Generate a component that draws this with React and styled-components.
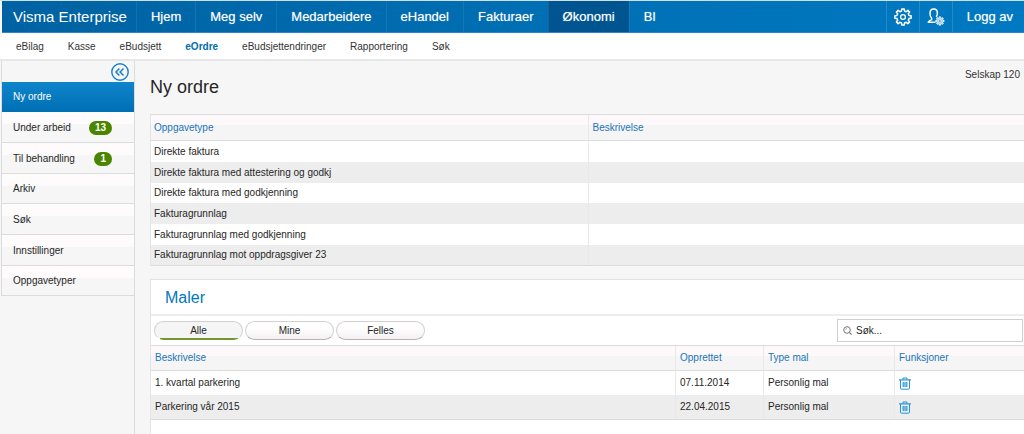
import React, { useState } from "react";
import styled, { createGlobalStyle } from "styled-components";

const colors = {
  text: "#262626",
  link: "#1a75b8",
  blue: "#0077c0",
  line: "#dcdcdc",
  page: "#f6f6f6",
  stripe: "#ededed",
  green: "#4a8500",
};

const GlobalStyle = createGlobalStyle`
  * {
    box-sizing: border-box;
  }

  body {
    margin: 0;
    background: ${colors.page};
    color: ${colors.text};
    font-family: "Liberation Sans", Arial, sans-serif;
    font-size: 10px;
    line-height: 14px;
  }

  a {
    color: inherit;
    text-decoration: none;
  }

  button,
  input {
    font: inherit;
    color: inherit;
  }
`;

const Page = styled.div`
  min-height: 100vh;
  display: flex;
  flex-direction: column;
  border-top: 1px solid #cfe0e4;
`;

const TopBar = styled.header`
  display: flex;
  height: 32px;
  margin-left: 2px;
  background: linear-gradient(90deg, #0062a2 0%, #0072b8 65%, #0079c2 100%);
  border-bottom: 1px solid #2f88c0;
  color: #fff;
  font-size: 13px;
  text-shadow: 0 0 1px rgba(255, 255, 255, 0.5);
`;

const Brand = styled.a`
  display: flex;
  align-items: center;
  padding: 0 9px 0 11px;
  font-size: 15px;
  text-shadow: none;
`;

const MainNav = styled.nav`
  display: flex;
  flex: 1;
`;

const MainLink = styled.a`
  display: flex;
  align-items: center;
  padding: 0 14px;
  border-left: 1px solid rgba(255, 255, 255, 0.08);
  background: ${(props) => (props.$active ? "#005590" : "transparent")};
  white-space: nowrap;
`;

const TopTool = styled.button`
  display: flex;
  align-items: center;
  justify-content: center;
  width: 33px;
  padding: 0;
  border: 0;
  border-left: 1px solid rgba(255, 255, 255, 0.14);
  background: transparent;
  color: #fff;
  cursor: pointer;
`;

const LogOut = styled(MainLink)`
  padding: 0 11px 0 14px;
  border-left-color: rgba(255, 255, 255, 0.14);
`;

const SubNav = styled.nav`
  display: flex;
  align-items: center;
  gap: 24px;
  height: 28px;
  padding: 1px 0 0 16px;
  background: #fff;
  border-bottom: 2px solid #e6e6e6;
`;

const SubLink = styled.a`
  color: ${(props) => (props.$active ? "#006cb0" : "#333")};
  font-weight: ${(props) => (props.$active ? 700 : 400)};
`;

const Body = styled.div`
  display: flex;
  flex: 1;
`;

const Sidebar = styled.aside`
  flex: 0 0 134px;
  margin-left: 1px;
  border-right: 1px solid ${colors.line};
`;

const CollapseRow = styled.div`
  display: flex;
  justify-content: flex-end;
  align-items: center;
  height: 21px;
  padding-right: 5px;
  border-left: 1px solid ${colors.line};
`;

const CollapseButton = styled.button`
  display: flex;
  padding: 0;
  border: 0;
  background: transparent;
  color: #1480cb;
  cursor: pointer;
`;

const SideMenu = styled.nav`
  display: grid;
  grid-auto-rows: 30px 31px 31px;
  border-left: 1px solid ${colors.line};
`;

const SideLink = styled.a`
  display: flex;
  align-items: center;
  justify-content: space-between;
  padding: 1px 22px 0 11px;
  border-bottom: 1px solid ${colors.line};
  background: linear-gradient(#fdfbfc 40%, #f6f6f6 40%);

  ${(props) =>
    props.$active &&
    `
    background: linear-gradient(#0f84cb, #0070b5);
    border-bottom-color: #0070b5;
    color: #fff;
  `}
`;

const Badge = styled.span`
  min-width: 17px;
  padding: 0 6px;
  border-radius: 7px;
  background: ${colors.green};
  color: #fff;
  font-weight: 700;
  text-align: center;
`;

const Content = styled.main`
  display: flex;
  flex: 1;
  flex-direction: column;
  min-width: 0;
  padding-left: 15px;
`;

const TitleRow = styled.div`
  display: flex;
  justify-content: space-between;
  height: 53px;
  padding: 7px 4px 0 0;
`;

const Title = styled.h1`
  margin: 0;
  padding-top: 8px;
  font-size: 18px;
  font-weight: 400;
  line-height: 22px;
`;

const Company = styled.span`
  color: #333;
`;

const Table = styled.table`
  width: 100%;
  table-layout: fixed;
  border-collapse: separate;
  border-spacing: 0;
  border-top: 1px solid ${colors.line};
  border-bottom: 1px solid ${colors.line};
  background: #fff;

  th,
  td {
    padding: 0 4px;
    text-align: left;
    font-weight: 400;
    white-space: nowrap;
  }

  th + th,
  td + td {
    border-left: 1px solid #e9e9e9;
  }

  th {
    height: 25px;
    border-bottom: 1px solid ${colors.line};
    background: linear-gradient(#fdf9fa 40%, #f6f5f6 40%);
    color: ${colors.link};
  }

  tbody tr:nth-child(even) {
    background: ${colors.stripe};
  }
`;

const TaskTable = styled(Table)`
  margin-bottom: 13px;
  border-left: 1px solid #e4e4e4;

  th {
    height: 26px;
    padding-top: 1px;
  }

  td {
    height: 21px;
  }

  th:first-child,
  td:first-child {
    padding-left: 3px;
  }

  tr:nth-child(3n) td {
    height: 20px;
  }
`;

const TemplateTable = styled(Table)`
  td {
    height: 24px;
  }
`;

const Column = styled.col`
  width: ${(props) => props.$width};
`;

const TaskLink = styled.a`
  color: ${colors.text};
`;

const Panel = styled.section`
  flex: 1;
  border-top: 1px solid #e2e2e2;
  border-left: 1px solid #e4e4e4;
  background: #fff;
`;

const PanelTitle = styled.h2`
  margin: 0;
  padding: 8px 0 6px 14px;
  border-bottom: 2px solid #ededed;
  color: ${colors.blue};
  font-size: 16px;
  font-weight: 400;
  line-height: 20px;
`;

const Toolbar = styled.div`
  display: flex;
  align-items: center;
  gap: 2px;
  height: 29px;
  padding: 0 1px 0 3px;
`;

const FilterButton = styled.button`
  width: 89px;
  height: 19px;
  padding: 0;
  border: 1px solid #d3cfd1;
  border-bottom-color: #b9b1b4;
  border-radius: 10px;
  background: linear-gradient(#fff 30%, #f4f1f2);
  cursor: pointer;

  ${(props) =>
    props.$active &&
    `
    background: linear-gradient(#6f962f, #6f962f) bottom / 78px 2px no-repeat border-box, #f4f5f4;
    border-bottom-color: transparent;
  `}
`;

const SearchBox = styled.label`
  display: flex;
  align-items: center;
  gap: 4px;
  width: 186px;
  height: 23px;
  margin-left: auto;
  padding: 0 5px;
  border: 1px solid #cfcfcf;
  color: #777;
`;

const SearchInput = styled.input`
  flex: 1;
  min-width: 0;
  padding: 0;
  border: 0;
  outline: 0;
  background: transparent;
  color: ${colors.text};

  &::placeholder {
    color: ${colors.text};
    opacity: 1;
  }
`;

const DeleteButton = styled.button`
  display: flex;
  padding: 0;
  border: 0;
  background: transparent;
  color: #2593d6;
  cursor: pointer;
`;

// Outline of a cog wheel, every tooth is a flat top between two valleys
const cogPath = (cx, cy, outer, inner, teeth) => {
  const step = (Math.PI * 2) / teeth;
  const points = [];
  for (let i = 0; i < teeth; i++) {
    const mid = i * step - Math.PI / 2;
    [
      [-0.31, inner],
      [-0.19, outer],
      [0.19, outer],
      [0.31, inner],
    ].forEach(([offset, radius]) => {
      const angle = mid + offset * step;
      points.push(
        `${(cx + radius * Math.cos(angle)).toFixed(2)} ${(cy + radius * Math.sin(angle)).toFixed(2)}`
      );
    });
  }
  return `M${points.join("L")}Z`;
};

const CogIcon = () => (
  <svg width="18" height="18" viewBox="0 0 18 18" fill="none" stroke="currentColor" aria-hidden="true">
    <path d={cogPath(9, 9, 8.2, 6.2, 8)} strokeWidth="1.5" strokeLinejoin="round" />
    <circle cx="9" cy="9" r="2.4" strokeWidth="1.3" />
  </svg>
);

const UserCogIcon = () => (
  <svg width="18" height="18" viewBox="0 0 18 18" fill="none" stroke="currentColor" aria-hidden="true">
    <path
      d="M8 14.3H1.2c0-1.6 2.4-1.8 3.3-2.6.5-.5.3-1.2-.1-1.8C3.5 8.800 3 7.200 3 5.300 3 2.700 4.500 1.100 6.700 1.100s3.700 1.600 3.700 4.200c0 1.300-.3 2.300-.8 3.200"
      strokeWidth="1.5"
      strokeLinecap="round"
      strokeLinejoin="round"
    />
    <path d={cogPath(12.9, 13, 4.2, 3.1, 8)} fill="#9ccbea" strokeWidth="0.9" strokeLinejoin="round" />
    <circle cx="12.9" cy="13" r="1.3" fill="#0077c0" strokeWidth="0.8" />
  </svg>
);

const CollapseIcon = () => (
  <svg width="18" height="18" viewBox="0 0 18 18" fill="none" stroke="currentColor" aria-hidden="true">
    <circle cx="9" cy="9" r="8.2" strokeWidth="1.4" />
    <path d="M8.4 5.4 5 9l3.4 3.6M12.5 5.4 9.1 9l3.4 3.6" strokeWidth="1.5" />
  </svg>
);

const SearchIcon = () => (
  <svg width="9" height="9" viewBox="0 0 9 9" fill="none" stroke="currentColor" aria-hidden="true">
    <circle cx="4" cy="4" r="3.3" />
    <path d="M6.4 6.4 8.6 8.6" strokeWidth="1.2" />
    <path d="M2.5 4A1.5 1.5 0 0 1 4 2.5" strokeWidth="0.5" />
  </svg>
);

const TrashIcon = () => (
  <svg width="12" height="13" viewBox="0 0 12 13" fill="none" stroke="currentColor" aria-hidden="true">
    <path d="M0 2.9h12" strokeWidth="1.2" />
    <path d="M4 2.6V1h4v1.6" />
    <path d="M1.5 3v8.2q0 1 1 1h7q1 0 1-1V3" />
    <path d="M4.2 5v5M6 5v5M7.8 5v5" strokeWidth="1.2" />
  </svg>
);

const mainItems = ["Hjem", "Meg selv", "Medarbeidere", "eHandel", "Fakturaer", "Økonomi", "BI"];

const subItems = [
  "eBilag",
  "Kasse",
  "eBudsjett",
  "eOrdre",
  "eBudsjettendringer",
  "Rapportering",
  "Søk",
];

const sideItems = [
  { label: "Ny ordre" },
  { label: "Under arbeid", count: 13 },
  { label: "Til behandling", count: 1 },
  { label: "Arkiv" },
  { label: "Søk" },
  { label: "Innstillinger" },
  { label: "Oppgavetyper" },
];

const taskTypes = [
  "Direkte faktura",
  "Direkte faktura med attestering og godkj",
  "Direkte faktura med godkjenning",
  "Fakturagrunnlag",
  "Fakturagrunnlag med godkjenning",
  "Fakturagrunnlag mot oppdragsgiver 23",
];

const templates = [
  { name: "1. kvartal parkering", created: "07.11.2014", type: "Personlig mal" },
  { name: "Parkering vår 2015", created: "22.04.2015", type: "Personlig mal" },
];

const filters = ["Alle", "Mine", "Felles"];

const App = () => {
  const [filter, setFilter] = useState("Alle");
  const [query, setQuery] = useState("");

  const visibleTemplates = templates.filter((t) =>
    t.name.toLowerCase().includes(query.toLowerCase())
  );

  return (
    <>
      <GlobalStyle />
      <Page>
        <TopBar>
          <Brand href="#">Visma Enterprise</Brand>
          <MainNav>
            {mainItems.map((item) => (
              <MainLink key={item} href="#" $active={item === "Økonomi"}>
                {item}
              </MainLink>
            ))}
          </MainNav>
          <TopTool type="button" aria-label="Innstillinger">
            <CogIcon />
          </TopTool>
          <TopTool type="button" aria-label="Brukerinnstillinger">
            <UserCogIcon />
          </TopTool>
          <LogOut href="#">Logg av</LogOut>
        </TopBar>

        <SubNav>
          {subItems.map((item) => (
            <SubLink key={item} href="#" $active={item === "eOrdre"}>
              {item}
            </SubLink>
          ))}
        </SubNav>

        <Body>
          <Sidebar>
            <CollapseRow>
              <CollapseButton type="button" aria-label="Skjul meny">
                <CollapseIcon />
              </CollapseButton>
            </CollapseRow>
            <SideMenu>
              {sideItems.map((item) => (
                <SideLink key={item.label} href="#" $active={item.label === "Ny ordre"}>
                  {item.label}
                  {item.count && <Badge>{item.count}</Badge>}
                </SideLink>
              ))}
            </SideMenu>
          </Sidebar>

          <Content>
            <TitleRow>
              <Title>Ny ordre</Title>
              <Company>Selskap 120</Company>
            </TitleRow>

            <TaskTable>
              <colgroup>
                <Column $width="50%" />
                <Column $width="50%" />
              </colgroup>
              <thead>
                <tr>
                  <th>Oppgavetype</th>
                  <th>Beskrivelse</th>
                </tr>
              </thead>
              <tbody>
                {taskTypes.map((task) => (
                  <tr key={task}>
                    <td>
                      <TaskLink href="#">{task}</TaskLink>
                    </td>
                    <td />
                  </tr>
                ))}
              </tbody>
            </TaskTable>

            <Panel>
              <PanelTitle>Maler</PanelTitle>
              <Toolbar>
                {filters.map((name) => (
                  <FilterButton
                    key={name}
                    type="button"
                    $active={name === filter}
                    onClick={() => setFilter(name)}
                  >
                    {name}
                  </FilterButton>
                ))}
                <SearchBox>
                  <SearchIcon />
                  <SearchInput
                    type="text"
                    aria-label="Søk i maler"
                    placeholder="Søk..."
                    value={query}
                    onChange={(e) => setQuery(e.target.value)}
                  />
                </SearchBox>
              </Toolbar>
              <TemplateTable>
                <colgroup>
                  <Column $width="auto" />
                  <Column $width="88px" />
                  <Column $width="131px" />
                  <Column $width="130px" />
                </colgroup>
                <thead>
                  <tr>
                    <th>Beskrivelse</th>
                    <th>Opprettet</th>
                    <th>Type mal</th>
                    <th>Funksjoner</th>
                  </tr>
                </thead>
                <tbody>
                  {visibleTemplates.map((t) => (
                    <tr key={t.name}>
                      <td>{t.name}</td>
                      <td>{t.created}</td>
                      <td>{t.type}</td>
                      <td>
                        <DeleteButton type="button" aria-label={`Slett ${t.name}`}>
                          <TrashIcon />
                        </DeleteButton>
                      </td>
                    </tr>
                  ))}
                </tbody>
              </TemplateTable>
            </Panel>
          </Content>
        </Body>
      </Page>
    </>
  );
};

export default App;
